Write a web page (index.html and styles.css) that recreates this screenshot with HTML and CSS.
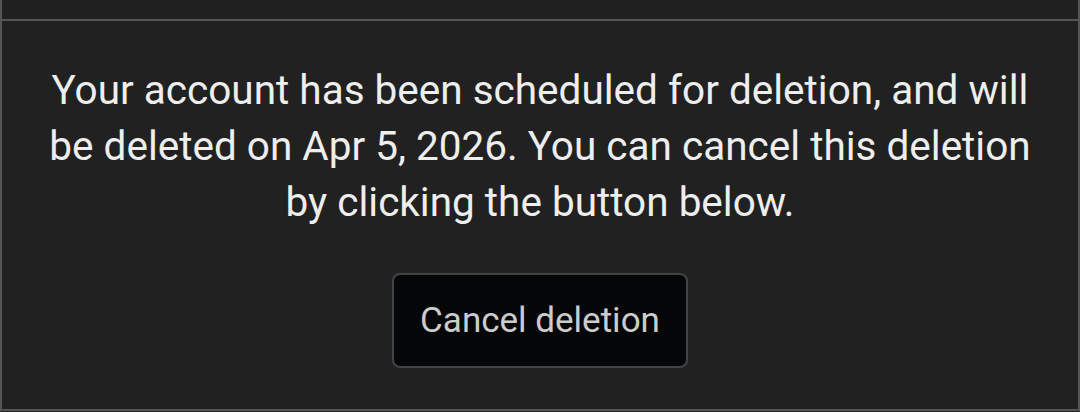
FILE: index.html
```html
<!DOCTYPE html>
<html>
<head>
<meta charset="utf-8">
<link rel="stylesheet" href="styles.css">
</head>
<body>
<div class="page">
  <div class="prev"></div>
  <section class="card">
    <p class="message">Your account has been scheduled for deletion, and will be deleted on Apr 5, 2026. You can cancel this deletion by clicking the button below.</p>
    <button class="cancel" type="button">Cancel deletion</button>
  </section>
</div>
</body>
</html>
```
FILE: styles.css
```css
html, body {
  margin: 0;
  padding: 0;
  background: #202020;
}
body {
  font-family: Roboto, "Liberation Sans", sans-serif;
  width: 1080px;
  height: 412px;
  overflow: hidden;
}
.page {
  display: flex;
  flex-direction: column;
}
.prev {
  height: 19px;
  border-left: 2px solid #555555;
  border-right: 2px solid #555555;
}
.card {
  border: 2px solid #555555;
  background: #212121;
  padding: 41px 30px 41px;
  display: flex;
  flex-direction: column;
  align-items: center;
  gap: 43px;
}
.message {
  margin: 0;
  color: #eeeeee;
  font-size: 40.5px;
  line-height: 56px;
  text-align: center;
}
.cancel {
  font-family: Roboto, "Liberation Sans", sans-serif;
  font-size: 35px;
  color: #cccccc;
  background: #050607;
  border: 2px solid #444444;
  border-radius: 8px;
  width: 296px;
  height: 95px;
  padding: 0;
  box-sizing: border-box;
}
```
